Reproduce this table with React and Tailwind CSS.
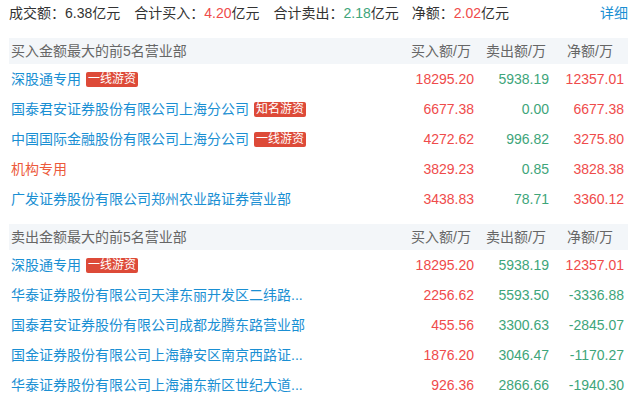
import React from 'react';

const buyRows = [
  { name: '深股通专用', tag: '一线游资', buy: '18295.20', sell: '5938.19', net: '12357.01' },
  { name: '国泰君安证券股份有限公司上海分公司', tag: '知名游资', buy: '6677.38', sell: '0.00', net: '6677.38' },
  { name: '中国国际金融股份有限公司上海分公司', tag: '一线游资', buy: '4272.62', sell: '996.82', net: '3275.80' },
  { name: '机构专用', orange: true, buy: '3829.23', sell: '0.85', net: '3828.38' },
  { name: '广发证券股份有限公司郑州农业路证券营业部', buy: '3438.83', sell: '78.71', net: '3360.12' },
];

const sellRows = [
  { name: '深股通专用', tag: '一线游资', buy: '18295.20', sell: '5938.19', net: '12357.01' },
  { name: '华泰证券股份有限公司天津东丽开发区二纬路...', buy: '2256.62', sell: '5593.50', net: '-3336.88' },
  { name: '国泰君安证券股份有限公司成都龙腾东路营业部', buy: '455.56', sell: '3300.63', net: '-2845.07' },
  { name: '国金证券股份有限公司上海静安区南京西路证...', buy: '1876.20', sell: '3046.47', net: '-1170.27' },
  { name: '华泰证券股份有限公司上海浦东新区世纪大道...', buy: '926.36', sell: '2866.66', net: '-1940.30' },
];

function Section({ title, rows }) {
  return (
    <div>
      {/* header band */}
      <div className="flex items-center h-[26px] bg-[#f3f6f9] text-[#666]">
        <div className="flex-1 pl-[2px]">{title}</div>
        <div className="w-[80px] text-right pr-[3px]">买入额/万</div>
        <div className="w-[75px] text-right pr-[3px]">卖出额/万</div>
        <div className="w-[79px] text-right pr-[15px]">净额/万</div>
      </div>
      {rows.map((r, i) => (
        <div key={i} className="flex items-center h-[30px]">
          <div className="flex-1 pl-[2px] flex items-center gap-[5px] whitespace-nowrap">
            <span className={r.orange ? 'text-[#ec5a3c]' : 'text-[#1a8fd3]'}>{r.name}</span>
            {r.tag && (
              <span className="bg-[#dd4a38] text-white text-[12px] leading-[15px] h-[15px] px-[2px] rounded-[2px]">
                {r.tag}
              </span>
            )}
          </div>
          <div className="w-[80px] text-right text-[#ef4b4b]">{r.buy}</div>
          <div className="w-[75px] text-right text-[#3ea57a]">{r.sell}</div>
          <div className={'w-[75px] text-right ' + (r.net.startsWith('-') ? 'text-[#3ea57a]' : 'text-[#ef4b4b]')}>
            {r.net}
          </div>
          <div className="w-[4px]" />
        </div>
      ))}
    </div>
  );
}

export default function App() {
  return (
    <div
      className="w-[637px] h-[396px] bg-white text-[14px] text-[#333] overflow-hidden"
      style={{ fontFamily: '"Liberation Sans", "Noto Sans CJK SC", sans-serif' }}
    >
      <div className="flex items-center h-[26px] px-[9px] whitespace-nowrap">
        <span>成交额：6.38亿元</span>
        <span className="ml-[14px]">合计买入：<span className="text-[#ef4b4b]">4.20</span>亿元</span>
        <span className="ml-[14px]">合计卖出：<span className="text-[#3ea57a]">2.18</span>亿元</span>
        <span className="ml-[13px]">净额：<span className="text-[#ef4b4b]">2.02</span>亿元</span>
        <span className="ml-auto mr-[0px] text-[#1a8fd3]">详细</span>
      </div>
      <div className="px-[9px] mt-[12px]">
        <Section title="买入金额最大的前5名营业部" rows={buyRows} />
        <div className="h-[10px]" />
        <Section title="卖出金额最大的前5名营业部" rows={sellRows} />
      </div>
    </div>
  );
}
